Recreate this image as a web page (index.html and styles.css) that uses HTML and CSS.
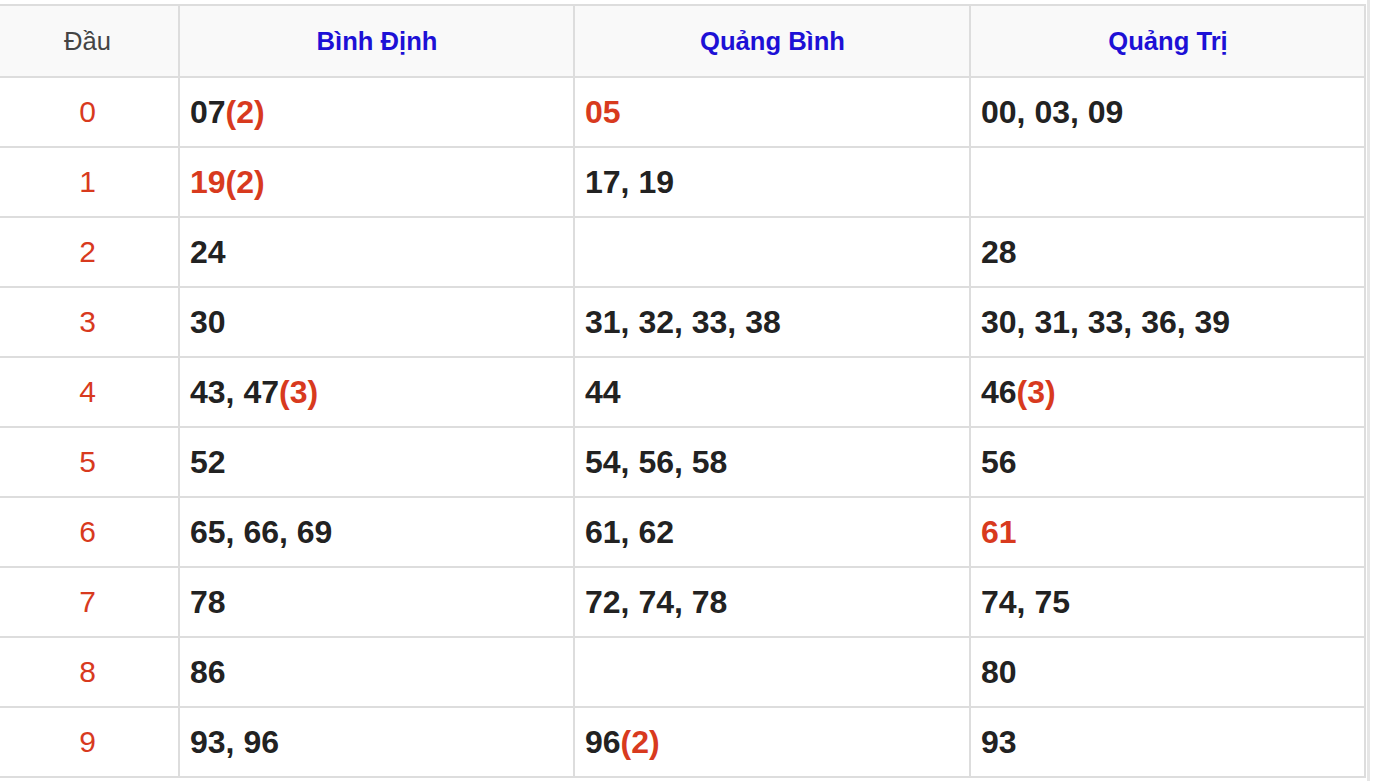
FILE: index.html
```html
<!DOCTYPE html>
<html lang="vi">
<head>
<meta charset="utf-8">
<title>Thống kê đầu</title>
<link rel="stylesheet" href="styles.css">
</head>
<body>
<div class="wrap">
<table class="loto">
<colgroup><col class="c-head"><col class="c-prov"><col class="c-prov2"><col class="c-prov"></colgroup>
<thead>
<tr><th class="dau">Đầu</th><th class="prov">Bình Định</th><th class="prov">Quảng Bình</th><th class="prov">Quảng Trị</th></tr>
</thead>
<tbody>
<tr><td class="k">0</td><td>07<span class="r">(2)</span></td><td><span class="r">05</span></td><td>00, 03, 09</td></tr>
<tr><td class="k">1</td><td><span class="r">19(2)</span></td><td>17, 19</td><td></td></tr>
<tr><td class="k">2</td><td>24</td><td></td><td>28</td></tr>
<tr><td class="k">3</td><td>30</td><td>31, 32, 33, 38</td><td>30, 31, 33, 36, 39</td></tr>
<tr><td class="k">4</td><td>43, 47<span class="r">(3)</span></td><td>44</td><td>46<span class="r">(3)</span></td></tr>
<tr><td class="k">5</td><td>52</td><td>54, 56, 58</td><td>56</td></tr>
<tr><td class="k">6</td><td>65, 66, 69</td><td>61, 62</td><td><span class="r">61</span></td></tr>
<tr><td class="k">7</td><td>78</td><td>72, 74, 78</td><td>74, 75</td></tr>
<tr><td class="k">8</td><td>86</td><td></td><td>80</td></tr>
<tr><td class="k">9</td><td>93, 96</td><td>96<span class="r">(2)</span></td><td>93</td></tr>
</tbody>
</table>
</div>
</body>
</html>
```
FILE: styles.css
```css
html, body {
  margin: 0;
  padding: 0;
  background: #fff;
}
body {
  font-family: "Liberation Sans", Arial, sans-serif;
  overflow: hidden;
}
.wrap {
  width: 1368px;
  margin-left: -2px;
  padding-top: 4px;
  padding-right: 1px;
  border-right: 3px solid #e6e6e6;
  min-height: 800px;
}
.loto {
  width: 1368px;
  border-collapse: collapse;
  table-layout: fixed;
  border: 2px solid #dddddd;
}
.c-head { width: 180px; }
.c-prov { width: 395px; }
.c-prov2 { width: 396px; }
.loto th, .loto td {
  border: 2px solid #dddddd;
  padding: 0 9px 0 10px;
  vertical-align: middle;
}
.loto thead tr { height: 72px; }
.loto thead th {
  background: #f9f9f9;
  font-size: 25.6px;
  text-align: center;
}
.loto th.dau {
  font-weight: normal;
  color: #444444;
  padding-right: 13px;
}
.loto th.prov {
  font-weight: bold;
  color: #1d10d6;
}
.loto tbody tr { height: 70px; }
.loto tbody td {
  font-size: 32px;
  font-weight: bold;
  color: #222222;
  text-align: left;
}
.loto tbody td.k {
  font-size: 30px;
  font-weight: normal;
  color: #d83a1e;
  text-align: center;
  padding-right: 13px;
}
.r { color: #d83a1e; }
```
